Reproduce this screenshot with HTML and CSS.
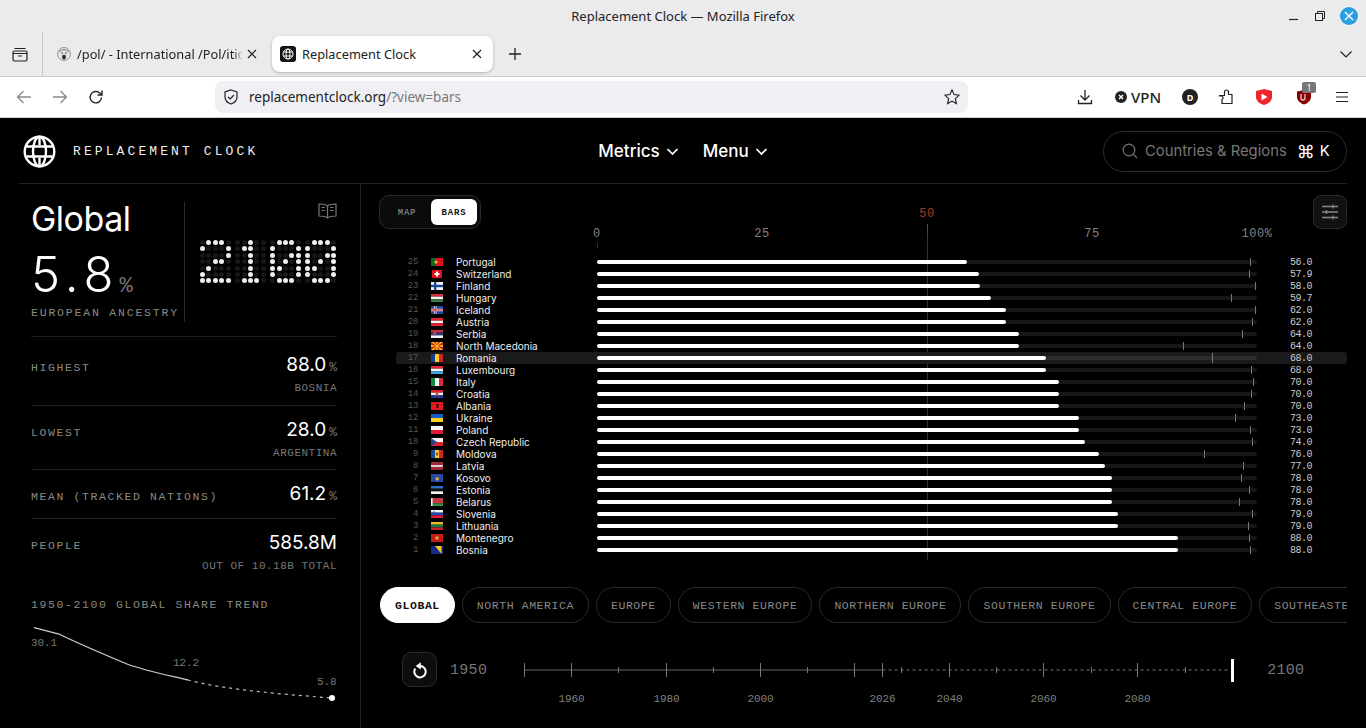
FILE: index.html
```html
<!DOCTYPE html>
<html lang="en-US">
<head>
<title>Replacement Clock</title>
<link rel="stylesheet" href="styles.css">
</head>
<body>

<div class="browser">
  <div class="titlebar">
    <div></div>
    <div class="wintitle">Replacement Clock — Mozilla Firefox</div>
    <div class="wincontrols">
      <svg width="12" height="12" viewBox="0 0 12 12"><path d="M1 9.5h9" stroke="#222" stroke-width="1.2"/></svg>
      <svg width="12" height="12" viewBox="0 0 12 12" fill="none" stroke="#222" stroke-width="1"><rect x="1.5" y="3.5" width="7" height="7"/><path d="M3.5 3.5v-2h7v7h-2"/></svg>
      <div class="winclose">
        <svg width="10" height="10" viewBox="0 0 10 10"><path d="M1 1l8 8M9 1l-8 8" stroke="#fff" stroke-width="1.4"/></svg>
      </div>
    </div>
  </div>

  <div class="tabstrip">
    <div class="tabgroups">
      <svg width="16" height="16" viewBox="0 0 16 16" fill="none" stroke="#222" stroke-width="1.2"><rect x="1" y="5" width="14" height="10" rx="1.5"/><path d="M2.5 2.5h11M1 7.5h14M6 10h4"/></svg>
    </div>
    <div class="tab">
      <svg width="16" height="16" viewBox="0 0 16 16"><circle cx="8" cy="8" r="6.5" fill="#e4e4e4" stroke="#999"/><path d="M3 6c2-3 8-3 10 0" fill="none" stroke="#777"/><path d="M5 7h2M9 7h2" stroke="#555"/><ellipse cx="8" cy="11" rx="2" ry="2.5" fill="#333"/></svg>
      <span class="tabtext faded">/pol/ - International /Pol/itic</span>
      <svg class="tabclose" width="10" height="10" viewBox="0 0 10 10"><path d="M1 1l8 8M9 1l-8 8" stroke="#222" stroke-width="1.2"/></svg>
    </div>
    <div class="tab active">
      <svg width="16" height="16" viewBox="0 0 16 16"><rect width="16" height="16" rx="3" fill="#111"/><g fill="none" stroke="#fff" stroke-width="1"><circle cx="8" cy="8" r="5"/><ellipse cx="8" cy="8" rx="2" ry="5"/><path d="M3.5 6h9M3.5 10h9"/></g></svg>
      <span class="tabtext">Replacement Clock</span>
      <svg class="tabclose" width="10" height="10" viewBox="0 0 10 10"><path d="M1 1l8 8M9 1l-8 8" stroke="#222" stroke-width="1.2"/></svg>
    </div>
    <svg class="newtab" width="14" height="14" viewBox="0 0 14 14"><path d="M7 1v12M1 7h12" stroke="#222" stroke-width="1.3"/></svg>
    <svg class="tablist" width="14" height="14" viewBox="0 0 14 14" fill="none"><path d="M1.5 4.5L7 10l5.5-5.5" stroke="#222" stroke-width="1.2"/></svg>
  </div>

  <div class="toolbar">
    <div class="navbuttons">
      <svg width="16" height="16" viewBox="0 0 16 16" fill="none" stroke="#8a8a8a" stroke-width="1.3"><path d="M15 8H1.5M7.5 2l-6 6 6 6"/></svg>
      <svg width="16" height="16" viewBox="0 0 16 16" fill="none" stroke="#8a8a8a" stroke-width="1.3"><path d="M1 8h13.5M8.5 2l6 6-6 6"/></svg>
      <svg width="16" height="16" viewBox="0 0 16 16" fill="none" stroke="#222" stroke-width="1.4"><path d="M13.5 8.5a5.7 5.7 0 1 1-1.7-4.4l1.7 1.6"/><path d="M14 1.5v4.5H9.5"/></svg>
    </div>
    <div class="urlbar">
      <svg width="16" height="16" viewBox="0 0 16 16" fill="none" stroke="#222" stroke-width="1.2"><path d="M8 1l6 2v5c0 3.5-2.6 5.8-6 7-3.400-1.200-6-3.500-6-7V3z"/><path d="M5 8l2.200 2L11 6"/></svg>
      <span class="urltext">replacementclock.org<span class="urlrest">/?view=bars</span></span>
      <svg class="urlstar" width="16" height="16" viewBox="0 0 16 16" fill="none" stroke="#222" stroke-width="1.1"><path d="M8 1l2.100 4.600 5 .6-3.700 3.400 1 5L8 12.100 3.600 14.600l1-5L.9 6.200l5-.6z"/></svg>
    </div>
    <div class="addons">
      <svg class="ad-download" width="16" height="16" viewBox="0 0 16 16" fill="none" stroke="#222" stroke-width="1.3"><path d="M8 1v9.500M3.500 6.500L8 11l4.500-4.500M1.500 11v3.500h13V11"/></svg>
      <div class="ad-vpn">
        <svg width="12" height="12" viewBox="0 0 12 12"><circle cx="6" cy="6" r="6" fill="#222"/><path d="M4 4l4 4M8 4l-4 4" stroke="#fff" stroke-width="1.4"/></svg>
        <span>VPN</span>
      </div>
      <div class="ad-d">D</div>
      <svg class="ad-puzzle" width="16" height="16" viewBox="0 0 16 16" fill="none" stroke="#222" stroke-width="1.2"><path d="M1.500 6.500h5V2.500a2 2 0 0 1 2-1.500 2 2 0 0 1 2 1.500v3h3.500v9H4V10.500a1.800 1.800 0 0 0 1-1.800A1.800 1.800 0 0 0 3 7H1.500z"/></svg>
      <svg class="ad-red" width="16" height="16" viewBox="0 0 16 16"><path d="M8 0l8 2v6c0 4-4 7-8 8-4-1-8-4-8-8V2z" fill="#f0242c"/><path d="M5.500 4.500l6 3.500-6 3.500z" fill="#fff"/></svg>
      <div class="ad-ublock">
        <svg width="14" height="16" viewBox="0 0 14 16"><path d="M7 1l7 1.500V8c0 3.500-3.500 6.500-7 7.500C3.500 14.500 0 11.500 0 8V2.500z" fill="#800"/><path d="M4 5v4a2 2 0 0 0 4 0V5" fill="none" stroke="#e8c8c8" stroke-width="1.300"/></svg>
        <span class="ad-badge">1</span>
      </div>
      <svg class="ad-menu" width="14" height="14" viewBox="0 0 14 14"><path d="M1 2.500h12M1 7h12M1 11.500h12" stroke="#222" stroke-width="1.2"/></svg>
    </div>
  </div>
</div>

<div class="page">
  <div class="header">
    <div class="brand">
      <svg width="33" height="33" viewBox="0 0 33 33" fill="none" stroke="#fff" stroke-width="2.400"><circle cx="16.500" cy="16.500" r="14.800"/><ellipse cx="16.500" cy="16.500" rx="6.500" ry="14.800"/><path d="M3.500 11.500h26M3.500 21.500h26M16.500 2v8M16.500 23v8"/></svg>
      <span>REPLACEMENT CLOCK</span>
    </div>
    <div class="nav">
      <div class="navitem">Metrics <svg width="13" height="13" viewBox="0 0 13 13" fill="none"><path d="M1.500 4l5 5 5-5" stroke="#fff" stroke-width="1.700"/></svg></div>
      <div class="navitem">Menu <svg width="13" height="13" viewBox="0 0 13 13" fill="none"><path d="M1.500 4l5 5 5-5" stroke="#fff" stroke-width="1.700"/></svg></div>
    </div>
    <div class="search">
      <svg width="16" height="16" viewBox="0 0 16 16" fill="none" stroke="#777" stroke-width="1.200"><circle cx="7" cy="7" r="5.800"/><path d="M11.300 11.300l3.700 3.700"/></svg>
      <span class="searchtext">Countries &amp; Regions</span>
      <span class="searchkey">⌘</span>
      <span class="searchkey k">K</span>
    </div>
  </div>

  <div class="content">
    <div class="sidebar">
      <div class="summary">
        <div class="summaryleft">
          <div class="place">Global</div>
          <div class="bigvalue">5.8<span>%</span></div>
          <div class="label">EUROPEAN ANCESTRY</div>
        </div>
        <div class="summaryright">
          <svg class="book" width="19" height="17" viewBox="0 0 19 17" fill="none" stroke="#777" stroke-width="1.200"><path d="M9.500 3C8 1.500 5 1 1 1v12c4 0 7 .5 8.500 2 1.500-1.500 4.500-2 8.500-2V1c-4 0-7 .5-8.500 2zM9.500 3v12"/><path d="M3.500 4.500h3.500M3.500 7.500h3.500M12 4.500h3.500M12 7.500h3.500"/></svg>
          <div class="dotyear" id="dotyear"></div>
        </div>
      </div>

      <div class="stat first">
        <div class="label">HIGHEST</div>
        <div class="statright">
          <div class="statvalue">88.0<span>%</span></div>
          <div class="statsub">BOSNIA</div>
        </div>
      </div>
      <div class="stat second">
        <div class="label">LOWEST</div>
        <div class="statright">
          <div class="statvalue">28.0<span>%</span></div>
          <div class="statsub">ARGENTINA</div>
        </div>
      </div>
      <div class="stat">
        <div class="label">MEAN (TRACKED NATIONS)</div>
        <div class="statright">
          <div class="statvalue">61.2<span>%</span></div>
        </div>
      </div>
      <div class="stat last">
        <div class="label">PEOPLE</div>
        <div class="statright">
          <div class="statvalue">585.8M</div>
          <div class="statsub">OUT OF 10.18B TOTAL</div>
        </div>
      </div>

      <div class="label trendlabel">1950-2100 GLOBAL SHARE TREND</div>
      <svg class="trend" width="306" height="100" viewBox="0 0 306 100" fill="none">
        <path d="M3 15.700L28 22C48 32 72 42 96 52C115 59 136 63 157 68" stroke="#ccc" stroke-width="1.300"/>
        <path d="M157 68C195 78 250 82 301 86" stroke="#bbb" stroke-width="1.200" stroke-dasharray="3 4"/>
        <circle cx="301" cy="86" r="3" fill="#fff"/>
        <text x="0" y="34" class="trendtext">30.1</text>
        <text x="142" y="54" class="trendtext">12.2</text>
        <text x="286" y="73" class="trendtext">5.8</text>
      </svg>
    </div>

    <div class="main">
      <div class="axis">
        <div class="fiftyline"></div>
        <div class="axistick t0"></div>
        <div class="axislabel a0">0</div>
        <div class="axislabel a25">25</div>
        <div class="axislabel a50">50</div>
        <div class="axislabel a75">75</div>
        <div class="axislabel a100">100%</div>
      </div>

      <div class="topbar">
        <div class="toggle">
          <div class="toggleitem">MAP</div>
          <div class="toggleitem on">BARS</div>
        </div>
        <div class="settings">
          <svg width="18" height="16" viewBox="0 0 18 16" stroke="#888" stroke-width="1.300"><path d="M1 2.500h16M1 8h16M1 13.500h16"/><path d="M12 .5v4M5.500 6v4M12 11.500v4"/></svg>
        </div>
      </div>

      <div class="rows" id="rows"></div>

      <div class="chips">
        <div class="chip on">GLOBAL</div>
        <div class="chip">NORTH AMERICA</div>
        <div class="chip">EUROPE</div>
        <div class="chip">WESTERN EUROPE</div>
        <div class="chip">NORTHERN EUROPE</div>
        <div class="chip">SOUTHERN EUROPE</div>
        <div class="chip">CENTRAL EUROPE</div>
        <div class="chip">SOUTHEASTERN EUROPE</div>
      </div>

      <div class="timeline">
        <div class="reset">
          <svg width="18" height="18" viewBox="0 0 18 18" fill="none"><path d="M4.300 7.500a5.700 5.700 0 1 0 4.700-2.500" stroke="#fff" stroke-width="2"/><path d="M9.800 1.200v7.400L4.700 5z" fill="#fff"/></svg>
        </div>
        <div class="yearend start">1950</div>
        <svg class="ruler" width="720" height="60" viewBox="0 0 720 60" fill="none">
          <path d="M4 18H362.600" stroke="#666" stroke-width="1"/>
          <path d="M362.600 18H708" stroke="#777" stroke-width="1" stroke-dasharray="3 3"/>
          <path d="M4.500 11v14M51.500 11v14M146.500 11v14M240.500 11v14M334.500 11v14M362.500 11v14M429.500 11v14M523.500 11v14M617.500 11v14" stroke="#777" stroke-width="1"/>
          <path d="M98.500 15v6M193.500 15v6M287.500 15v6M381.500 15v6M476.500 15v6M571.500 15v6M665.500 15v6" stroke="#777" stroke-width="1"/>
          <rect x="711" y="7" width="3" height="23" fill="#fff"/>
          <text x="51.500" y="50" class="rulertext">1960</text>
          <text x="146.500" y="50" class="rulertext">1980</text>
          <text x="240.500" y="50" class="rulertext">2000</text>
          <text x="362.500" y="50" class="rulertext">2026</text>
          <text x="429.500" y="50" class="rulertext">2040</text>
          <text x="523.500" y="50" class="rulertext">2060</text>
          <text x="617.500" y="50" class="rulertext">2080</text>
        </svg>
        <div class="yearend end">2100</div>
      </div>
    </div>
  </div>
</div>

<script src="script.js"></script>
</body>
</html>
```

FILE: styles.css
```css
* { box-sizing: border-box; }
html, body { margin: 0; height: 100%; }
body {
  width: 1366px;
  height: 728px;
  overflow: hidden;
  background-color: #000;
  font-family: "Liberation Mono", monospace;
}
svg { display: block; flex: none; }

/* browser chrome */
.browser { height: 118px; background-color: #ebebed; font-family: "Noto Sans", sans-serif; color: #222; }
.titlebar { height: 32px; display: grid; grid-template-columns: 1fr auto 1fr; align-items: center; }
.wintitle { font-size: 13px; }
.wincontrols { display: flex; justify-content: flex-end; align-items: center; gap: 14px; padding-right: 8px; }
.winclose { width: 18px; height: 18px; border-radius: 50%; background-color: #2a9fe0; display: flex; align-items: center; justify-content: center; }

.tabstrip { height: 45px; display: flex; align-items: flex-start; padding-top: 4px; border-bottom: 1px solid #ccccd0; }
.tabgroups { width: 43px; height: 44px; margin-top: -4px; padding: 14px 0 0 12px; border-right: 1px solid #c8c8cc; }
.tab { display: flex; align-items: center; height: 36px; font-size: 12.8px; }
.tab:nth-child(2) { width: 229px; padding-left: 13px; }
.tab.active { width: 221px; padding-left: 8px; background-color: #fff; border-radius: 8px; box-shadow: 0 1px 3px rgba(0,0,0,.25); }
.tabtext { margin-left: 6px; white-space: nowrap; overflow: hidden; flex: 1; }
.tabtext.faded { margin-left: 5px; max-width: 166px; -webkit-mask-image: linear-gradient(to left, transparent, #000 10px); }
.tabclose { margin: 0 11px 0 5px; }
.tab:nth-child(2) .tabclose { margin: 0 0 0 4px; }
.newtab { margin: 11px 0 0 15px; }
.tablist { margin: 11px 13px 0 auto; }

.toolbar { height: 41px; background-color: #fff; border-bottom: 1px solid #d0d0d4; display: flex; align-items: center; }
.navbuttons { width: 215px; display: flex; gap: 20px; padding-left: 16px; }
.urlbar { width: 753px; height: 32px; background-color: #f0f0f4; border-radius: 8px; display: flex; align-items: center; padding: 0 8px; }
.urlbar > svg:first-child { margin-right: 10px; }
.urltext { font-size: 13.5px; color: #222; }
.urlrest { color: #777; }
.urlstar { margin-left: auto; }
.addons { flex: 1; position: relative; height: 40px; display: flex; align-items: center; padding-left: 109px; }
.ad-vpn { display: flex; align-items: center; gap: 4px; margin-left: 22px; font-size: 15px; font-weight: 500; }
.ad-d { width: 16px; height: 16px; border-radius: 50%; background-color: #222; color: #fff; font-size: 9px; font-weight: 700; display: flex; align-items: center; justify-content: center; margin-left: 21px; }
.ad-puzzle { margin-left: 20px; }
.ad-red { margin-left: 22px; }
.ad-ublock { position: relative; margin-left: 25px; }
.ad-badge { position: absolute; top: -7px; left: 5px; width: 14px; height: 11px; background-color: #777; border-radius: 2px; color: #fff; font-size: 9px; line-height: 11px; text-align: center; }
.ad-menu { margin-left: 24px; }

/* page header */
.page { height: 610px; padding: 0 19px; }
.header { height: 66px; padding-top: 1px; border-bottom: 1px solid #222; display: grid; grid-template-columns: 1fr auto 1fr; align-items: center; }
.brand { display: flex; align-items: center; gap: 17px; padding-left: 4px; color: #eee; font-size: 13px; letter-spacing: 3.100px; }
.nav { display: flex; gap: 24px; color: #fff; font-family: Inter, sans-serif; font-size: 17px; font-weight: 500; }
.navitem { display: flex; align-items: center; gap: 6px; }
.search { justify-self: end; width: 244px; height: 41px; border: 1px solid #2e2e2e; border-radius: 21px; display: flex; align-items: center; padding-left: 18px; font-family: Inter, sans-serif; font-size: 14.8px; }
.searchtext { color: #777; margin-left: 7px; white-space: nowrap; }
.searchkey { color: #fff; margin-left: 10px; font-size: 18px; }
.searchkey.k { font-size: 14.800px; margin-left: 5px; }

/* layout under the header */
.content { display: grid; grid-template-columns: 342px 1fr; height: 544px; }
.sidebar { border-right: 1px solid #222; padding: 0 23px 0 12px; }
.label { font-size: 11.500px; letter-spacing: 1.600px; color: #8a8a80; white-space: nowrap; }

.summary { display: flex; height: 153px; padding-top: 18px; border-bottom: 1px solid #1e1e1e; }
.summaryleft { width: 154px; height: 120px; border-right: 1px solid #2a2a2a; }
.summaryleft .label { letter-spacing: 1.800px; line-height: 14px; margin-top: 5px; }
.place { font-family: Inter, sans-serif; color: #fff; font-size: 34px; line-height: 34px; letter-spacing: -.5px; }
.bigvalue { font-family: Inter, sans-serif; color: #fff; font-size: 49px; font-weight: 300; line-height: 52px; margin-top: 13px; letter-spacing: 6px; }
.bigvalue span { font-family: "Liberation Mono", monospace; font-size: 22px; font-weight: 400; line-height: 0; color: #777; letter-spacing: 0; }
.summaryright { flex: 1; padding-left: 15px; position: relative; }
.book { position: absolute; right: 0; top: 1px; }
.dotyear { display: flex; gap: 4.600px; margin-top: 38px; }
.digit { display: grid; grid-template-columns: repeat(5, 5px); grid-auto-rows: 5px; gap: 1.400px; }
.dot { border-radius: 50%; background-color: #171717; }
.dot.lit { background-color: #eee; }

.stat { display: flex; justify-content: space-between; padding: 14px 0 14px; border-bottom: 1px solid #1e1e1e; }
.stat.first { padding: 18px 0 10px; }
.stat.second { padding-bottom: 9px; }
.stat.last { border-bottom: none; padding-bottom: 0; }
.stat .label { height: 20px; line-height: 20px; padding-top: 3px; }
.statright { text-align: right; }
.statvalue { font-family: Inter, sans-serif; color: #fff; font-size: 19px; line-height: 20px; }
.statvalue span { font-family: "Liberation Mono", monospace; font-size: 13px; line-height: 0; color: #777; margin-left: 3px; }
.statsub { font-size: 11px; letter-spacing: .5px; line-height: 14px; margin-top: 6px; color: #777; }
.trendlabel { line-height: 14px; margin-top: 25px; }
.trendtext { font-family: "Liberation Mono", monospace; font-size: 11px; letter-spacing: -.1px; fill: #777; }

/* chart */
.main { position: relative; min-width: 0; padding-top: 11px; }
.axis { position: absolute; left: 236px; top: 0; width: 660px; height: 380px; }
.axislabel { position: absolute; top: 44px; transform: translateX(-50%); font-size: 12px; letter-spacing: .55px; line-height: 12px; color: #808080; }
.a0 { left: 0; }
.a25 { left: 25%; }
.a50 { left: 50%; top: 24px; color: #a33c22; }
.a75 { left: 75%; }
.a100 { left: 100%; }
.axistick { position: absolute; left: 0; top: 59px; width: 1px; height: 5px; background-color: #333; }
.fiftyline { position: absolute; left: 330px; top: 40px; width: 1px; height: 336px; background: linear-gradient(#a33c22, #333 16px); }

.topbar { display: flex; justify-content: space-between; padding-left: 18px; position: relative; }
.toggle { display: flex; width: 102px; height: 34px; padding: 3px; border: 1px solid #2a2a2a; border-radius: 10px; background-color: #0b0b0b; }
.toggleitem { flex: 1; display: flex; align-items: center; justify-content: center; padding-top: 1px; font-size: 9px; letter-spacing: .8px; color: #777; font-weight: 700; }
.toggleitem.on { flex: none; width: 46px; background-color: #fff; color: #111; border-radius: 6px; }
.settings { width: 34px; height: 34px; border: 1px solid #2a2a2a; border-radius: 8px; background-color: #111; display: flex; align-items: center; justify-content: center; }

.rows { margin: 27px 0 0 35px; position: relative; }
.row { display: flex; align-items: center; height: 12px; }
.row.hl { background-color: #1a1a1a; border-radius: 3px; }
.rank { width: 22px; text-align: right; font-size: 9px; letter-spacing: -.3px; color: #555; }
.flag { margin-left: 13px; }
.name { margin-left: 13px; width: 141px; font-family: Inter, sans-serif; font-size: 10px; color: #eee; white-space: nowrap; }
.track { position: relative; width: 660px; height: 4px; background-color: #171717; border-radius: 2px; }
.row.hl .track { background-color: #2c2c2c; }
.fill { height: 4px; background-color: #fff; border-radius: 2px; }
.mark { position: absolute; top: -2px; width: 1px; height: 8px; background-color: #777; }
.row.hl .mark { top: -3px; height: 10px; }
.val { margin-left: 33px; font-size: 10px; letter-spacing: -.5px; color: #ccc; }

.chips { display: flex; gap: 7px; margin: 31px 0 0 19px; overflow: hidden; }
.chip { flex: none; height: 36px; padding: 0 14px; border: 1px solid #2c2c2c; border-radius: 18px; font-size: 11.500px; letter-spacing: .57px; line-height: 35px; color: #888; white-space: nowrap; }
.chip.on { background-color: #fff; border-color: #fff; color: #111; font-weight: 700; }

.timeline { display: flex; margin: 29px 0 0 41px; }
.reset { flex: none; width: 35px; height: 35px; border: 1px solid #2a2a2a; border-radius: 9px; background-color: #0d0d0d; display: flex; align-items: center; justify-content: center; }
.yearend { font-size: 15px; letter-spacing: .3px; line-height: 37px; color: #777; }
.yearend.start { margin: 0 33px 0 13px; }
.yearend.end { margin-left: 27px; }
.rulertext { font-family: "Liberation Mono", monospace; font-size: 11px; letter-spacing: -.1px; fill: #808080; text-anchor: middle; }
```

FILE: script.js
```js
var data = [
  ["Portugal", 56.0, 1250], ["Switzerland", 57.9, 1249], ["Finland", 58.0, 1255],
  ["Hungary", 59.7, 1231], ["Iceland", 62.0, 1255], ["Austria", 62.0, 1252],
  ["Serbia", 64.0, 1242], ["North Macedonia", 64.0, 1183], ["Romania", 68.0, 1212],
  ["Luxembourg", 68.0, 1251], ["Italy", 70.0, 1253], ["Croatia", 70.0, 1251],
  ["Albania", 70.0, 1244], ["Ukraine", 73.0, 1235], ["Poland", 73.0, 1250],
  ["Czech Republic", 74.0, 1252], ["Moldova", 76.0, 1204], ["Latvia", 77.0, 1243],
  ["Kosovo", 78.0, 1241], ["Estonia", 78.0, 1249], ["Belarus", 78.0, 1239],
  ["Slovenia", 79.0, 1252], ["Lithuania", 79.0, 1248], ["Montenegro", 88.0, 1249],
  ["Bosnia", 88.0, 1250]
];

function rect(x, y, w, h, c) {
  return '<rect x="' + x + '" y="' + y + '" width="' + w + '" height="' + h + '" fill="' + c + '"/>';
}
function hbands(cols) {
  var s = "", h = 8 / cols.length;
  for (var i = 0; i < cols.length; i++) s += rect(0, i * h, 12, h, cols[i]);
  return s;
}
function vbands(cols) {
  var s = "", w = 12 / cols.length;
  for (var i = 0; i < cols.length; i++) s += rect(i * w, 0, w, 8, cols[i]);
  return s;
}

var flags = {
  "Portugal": rect(0, 0, 5, 8, "#0a6a2a") + rect(5, 0, 7, 8, "#e01020") + '<circle cx="5" cy="4" r="1.6" fill="#f0c020"/>',
  "Switzerland": rect(1, 0, 10, 8, "#e01020") + rect(5, 1.5, 2, 5, "#fff") + rect(3.5, 3, 5, 2, "#fff"),
  "Finland": rect(0, 0, 12, 8, "#f4f4f4") + rect(3, 0, 2.4, 8, "#1a4a96") + rect(0, 2.8, 12, 2.4, "#1a4a96"),
  "Hungary": hbands(["#d03040", "#f4f4f4", "#3a7a4a"]),
  "Iceland": rect(0, 0, 12, 8, "#1a4a96") + rect(3, 0, 2.4, 8, "#fff") + rect(0, 2.8, 12, 2.4, "#fff") + rect(3.6, 0, 1.2, 8, "#d02030") + rect(0, 3.4, 12, 1.2, "#d02030"),
  "Austria": hbands(["#e02030", "#f4f4f4", "#e02030"]),
  "Serbia": hbands(["#c8303a", "#2a3f80", "#f4f4f4"]) + rect(2.5, 1.5, 2.5, 4, "#d04048"),
  "North Macedonia": rect(0, 0, 12, 8, "#d02018") + '<path d="M0 0l6 4-3-4zM12 0L6 4l3-4zM0 8l6-4-3 4zM12 8L6 4l3 4zM0 3v2l6-1zM12 3v2L6 4zM5 0h2L6 4zM5 8h2L6 4z" fill="#f8d020"/><circle cx="6" cy="4" r="1.300" fill="#f8d020"/>',
  "Romania": vbands(["#1a3a90", "#f8d020", "#d82030"]),
  "Luxembourg": hbands(["#e02838", "#f4f4f4", "#40a8e0"]),
  "Italy": vbands(["#108a40", "#f4f4f4", "#d82a38"]),
  "Croatia": hbands(["#d82030", "#f4f4f4", "#1a3a90"]) + rect(4.8, 2, 2.4, 3.6, "#d84048"),
  "Albania": rect(0, 0, 12, 8, "#e01a20") + '<path d="M6 1.500l2 1.500-1 1 .5 2H5.500l.5-2-1-1z" fill="#111"/>',
  "Ukraine": hbands(["#1a5ac0", "#f8d020"]),
  "Poland": hbands(["#f4f4f4", "#e01a3a"]),
  "Czech Republic": hbands(["#f4f4f4", "#d82030"]) + '<path d="M0 0l6 4-6 4z" fill="#1a4a90"/>',
  "Moldova": vbands(["#1a4aa0", "#f8d020", "#d82030"]) + rect(5, 2.5, 2, 3, "#8a5a20"),
  "Latvia": rect(0, 0, 12, 8, "#9a2a3a") + rect(0, 3.2, 12, 1.6, "#f4f4f4"),
  "Kosovo": rect(0, 0, 12, 8, "#2a4aa0") + '<path d="M4.500 3.500h3l.5 1.500-1 1.500H5.500l-1-1.500z" fill="#d8b040"/>',
  "Estonia": hbands(["#2a72c0", "#111", "#f4f4f4"]),
  "Belarus": rect(0, 0, 12, 5.3, "#c83a40") + rect(0, 5.3, 12, 2.7, "#3a8a4a") + rect(0, 0, 1.600, 8, "#eee"),
  "Slovenia": hbands(["#f4f4f4", "#1a4ab0", "#e01a30"]) + rect(2, 1.500, 2, 2.500, "#2a5ab8"),
  "Lithuania": hbands(["#f0b820", "#0a7a4a", "#c82030"]),
  "Montenegro": rect(0, 0, 12, 8, "#c81a1a") + '<circle cx="6" cy="4" r="1.800" fill="#d8a830"/>',
  "Bosnia": rect(0, 0, 12, 8, "#1a2a80") + '<path d="M4 0h6.500v8z" fill="#f0c820"/>'
};

var rows = document.getElementById("rows");
var html = "";
for (var i = 0; i < data.length; i++) {
  var d = data[i];
  var hl = d[0] == "Romania" ? " hl" : "";
  html += '<div class="row' + hl + '">'
    + '<div class="rank">' + (25 - i) + '</div>'
    + '<svg class="flag" width="12" height="8" viewBox="0 0 12 8">' + flags[d[0]] + '</svg>'
    + '<div class="name">' + d[0] + '</div>'
    + '<div class="track">'
    + '<div class="fill" style="width:' + d[1] + '%"></div>'
    + '<div class="mark" style="left:' + (d[2] - 597) + 'px"></div>'
    + '</div>'
    + '<div class="val">' + d[1].toFixed(1) + '</div>'
    + '</div>';
}
rows.innerHTML = html;

// dot matrix year, one string per row
var digits = {
  "2": [".###.", "#...#", "....#", "..##.", ".#...", "#....", "#####"],
  "1": ["..#..", ".##..", "..#..", "..#..", "..#..", "..#..", ".###."],
  "0": [".###.", "#...#", "#..##", "#.#.#", "##..#", "#...#", ".###."]
};
var year = "2100";
var dots = "";
for (var n = 0; n < year.length; n++) {
  var pattern = digits[year[n]].join("");
  dots += '<div class="digit">';
  for (var p = 0; p < pattern.length; p++) {
    dots += '<div class="dot' + (pattern[p] == "#" ? " lit" : "") + '"></div>';
  }
  dots += '</div>';
}
document.getElementById("dotyear").innerHTML = dots;
```
